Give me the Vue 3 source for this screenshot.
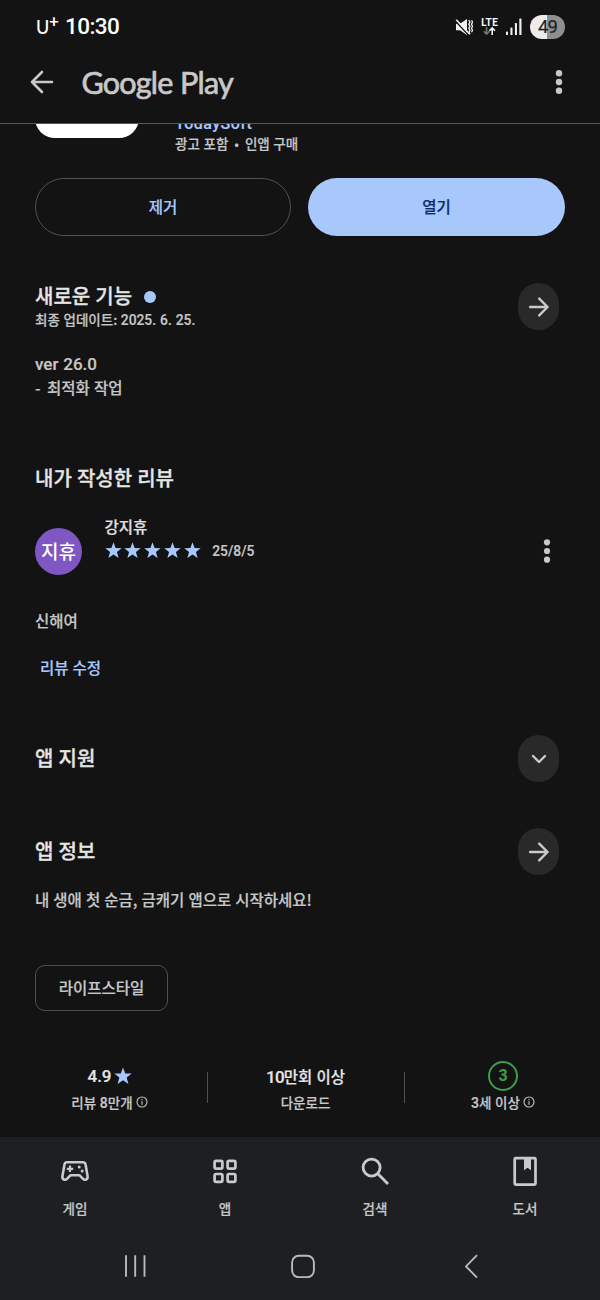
<script setup>
const stars = [0, 1, 2, 3, 4]
const starPath = 'M12 .5l3 8 8.600.3-6.700 5.300 2.300 8.400L12 17.800l-7.200 4.700 2.300-8.400L.4 8.800 9 8.500z'
</script>

<template>
  <div class="screen">
    <div class="status">
      <div class="clock"><span class="carrier">U</span><span class="plus">+</span><span class="time">10:30</span></div>
      <div class="indicators">
        <svg class="mute" width="18" height="18" viewBox="0 0 18 18">
          <path d="M1 5.800h4L12 1v16l-7-4.800H1z" fill="#f2f2f2" />
          <path d="M13.800 2.200l1.200 2-1.200 2 1.200 2-1.200 2 1.200 2-1.200 2 1.200 2M16.600 2.200l.9 2-1 2 1 2-1 2 1 2-1 2" fill="none" stroke="#f2f2f2" stroke-width="1.300" />
          <path d="M0 2.600l13 14" stroke="#131313" stroke-width="1.400" />
          <path d="M1.200 1.800l13.600 14.400" stroke="#f2f2f2" stroke-width="1.600" />
        </svg>
        <div class="lte">
          <span>LTE</span>
          <svg width="13" height="8" viewBox="0 0 13 8" fill="none" stroke-width="1.600">
            <path d="M3.600 0v6.800M.8 4.200l2.800 2.900 2.800-2.900" stroke="#777" />
            <path d="M9.200 8V1M6.400 3.700L9.200.9 12 3.700" stroke="#f2f2f2" />
          </svg>
        </div>
        <svg class="signal" width="16" height="17" viewBox="0 0 16 17" fill="#eee">
          <rect x="0" y="13.500" width="2" height="3.500" rx=".6" />
          <rect x="4.400" y="9.500" width="2.100" height="7.500" rx=".6" />
          <rect x="8.900" y="5" width="2.100" height="12" rx=".6" />
          <rect x="13.300" y=".5" width="2.200" height="16.500" rx=".6" />
        </svg>
        <div class="battery">49</div>
      </div>
    </div>

    <header class="topbar">
      <svg class="back" width="24" height="24" viewBox="0 0 24 24" fill="none" stroke="#c8c8c8" stroke-width="2.600" stroke-linecap="round" stroke-linejoin="round">
        <path d="M22 12H2M12 2L2 12l10 10" />
      </svg>
      <div class="logo">Google Play</div>
      <svg class="more" width="8" height="26" viewBox="0 0 8 26" fill="#c8c8c8">
        <circle cx="4" cy="4.200" r="3.200" /><circle cx="4" cy="13" r="3.200" /><circle cx="4" cy="21.800" r="3.200" />
      </svg>
    </header>

    <main>
      <div class="app-head">
        <div class="app-icon"></div>
        <div class="app-text">
          <div class="dev">TodaySoft</div>
          <div class="meta">광고 포함 <i>•</i> 인앱 구매</div>
        </div>
      </div>

      <div class="actions">
        <button class="remove">제거</button>
        <button class="open">열기</button>
      </div>

      <section class="news">
        <div class="row">
          <div class="news-title">
            <h2>새로운 기능<span class="dot"></span></h2>
            <div class="updated">최종 업데이트: <span class="la">2025. 6. 25.</span></div>
          </div>
          <div class="round">
            <svg width="20" height="20" viewBox="0 0 20 20"><path d="M1 10h17.400M10.200 1.600l8.400 8.400-8.400 8.400" /></svg>
          </div>
        </div>
        <div class="notes"><div class="la ver">ver 26.0</div><div><span class="dash">-</span> 최적화 작업</div></div>
      </section>

      <section class="review">
        <h2>내가 작성한 리뷰</h2>
        <div class="reviewer">
          <div class="avatar">지휴</div>
          <div class="who">
            <div class="name">강지휴</div>
            <div class="rating">
              <svg v-for="s in stars" :key="s" width="17" height="17" viewBox="0 0 24 24"><path :d="starPath" fill="#a8c7fa" /></svg>
              <span class="date">25/8/5</span>
            </div>
          </div>
          <svg class="more" width="8" height="26" viewBox="0 0 8 26" fill="#c8c8c8">
            <circle cx="4" cy="4.300" r="3.100" /><circle cx="4" cy="13" r="3.100" /><circle cx="4" cy="21.700" r="3.100" />
          </svg>
        </div>
        <p class="comment">신해여</p>
        <a class="edit">리뷰 수정</a>
      </section>

      <div class="row support">
        <h2>앱 지원</h2>
        <div class="round">
          <svg width="20" height="20" viewBox="0 0 20 20"><path d="M4 7l6 6 6-6" /></svg>
        </div>
      </div>

      <div class="row info">
        <h2>앱 정보</h2>
        <div class="round">
          <svg width="20" height="20" viewBox="0 0 20 20"><path d="M1 10h17.400M10.200 1.600l8.400 8.400-8.400 8.400" /></svg>
        </div>
      </div>
      <p class="desc">내 생애 첫 순금, 금캐기 앱으로 시작하세요!</p>
      <div class="chip">라이프스타일</div>

      <div class="stats">
        <div class="stat">
          <div class="top"><span class="la score">4.9</span><svg width="18" height="18" viewBox="0 0 24 24"><path :d="starPath" fill="#a8c7fa" /></svg></div>
          <div class="bottom"><span>리뷰 <span class="la">8</span>만개</span>
            <svg class="i" width="12" height="12" viewBox="0 0 12 12"><circle cx="6" cy="6" r="5" /><path d="M6 5.200v3.500M6 3v1.200" /></svg>
          </div>
        </div>
        <div class="stat">
          <div class="top"><span><span class="la ten">10</span>만회 이상</span></div>
          <div class="bottom">다운로드</div>
        </div>
        <div class="stat">
          <div class="top"><span class="age">3</span></div>
          <div class="bottom"><span><span class="la">3</span>세 이상</span>
            <svg class="i" width="12" height="12" viewBox="0 0 12 12"><circle cx="6" cy="6" r="5" /><path d="M6 5.200v3.500M6 3v1.200" /></svg>
          </div>
        </div>
      </div>
    </main>

    <nav class="tabs">
      <div class="tab">
        <svg width="32" height="32" viewBox="0 0 32 32" fill="none" stroke="#c8cacc" stroke-width="2.600" stroke-linejoin="round">
          <path d="M8.200 7.300h15.600c1.600 0 2.600 1 2.800 2.400l2 11.700c.4 3.200-2.800 4.200-4.600 2.400L20.400 20.200h-8.800L8 23.800c-1.800 1.800-5 .8-4.600-2.400l2-11.700c.2-1.400 1.200-2.400 2.800-2.400z" />
          <path d="M11 10.600v6.400M7.800 13.800h6.400" stroke-width="2.200" />
          <g fill="#c8cacc" stroke="none"><circle cx="20.200" cy="12" r="1.500" /><circle cx="23.200" cy="16" r="1.500" /></g>
        </svg>
        <span>게임</span>
      </div>
      <div class="tab">
        <svg width="32" height="32" viewBox="0 0 32 32" fill="none" stroke="#c8cacc" stroke-width="2.700">
          <rect x="5.600" y="5.800" width="7.800" height="7.800" rx="1.500" /><rect x="18.600" y="5.800" width="7.800" height="7.800" rx="1.500" />
          <rect x="5.600" y="19" width="7.800" height="7.800" rx="1.500" /><rect x="18.600" y="19" width="7.800" height="7.800" rx="1.500" />
        </svg>
        <span>앱</span>
      </div>
      <div class="tab">
        <svg width="32" height="32" viewBox="0 0 32 32" fill="none" stroke="#c8cacc" stroke-width="2.800">
          <circle cx="12.600" cy="12.600" r="8.500" /><path d="M18.600 18.600L29 29" />
        </svg>
        <span>검색</span>
      </div>
      <div class="tab">
        <svg width="32" height="32" viewBox="0 0 32 32" fill="none" stroke="#c8cacc" stroke-width="2.700" stroke-linejoin="round">
          <rect x="5.700" y="3.200" width="20.800" height="26.400" rx="1" />
          <path d="M15 3h7v12.300l-3.500-2.600-3.500 2.600z" fill="#c8cacc" stroke="none" />
        </svg>
        <span>도서</span>
      </div>
    </nav>
    <div class="sysnav">
      <svg width="24" height="24" viewBox="0 0 24 24"><path d="M3 1.200v21.600M12.200 1.200v21.600M21.500 1.200v21.600" /></svg>
      <svg width="24" height="24" viewBox="0 0 24 24"><rect x="1.100" y="1.800" width="21.800" height="21.400" rx="6.600" /></svg>
      <svg width="24" height="24" viewBox="0 0 24 24"><path d="M18 1.200L7 12.400l11 11.200" /></svg>
    </div>
  </div>
</template>

<style>
html, body { margin: 0; background: #131313; }
</style>

<style scoped>
.screen {
  width: 600px; height: 1300px; overflow: hidden; background: #131313; color: #c6c7c8;
  display: flex; flex-direction: column; box-sizing: border-box;
  font-family: "Noto Sans CJK KR", sans-serif; font-weight: 500; font-size: 15.500px;
  word-spacing: .6px;
  -webkit-text-stroke: .2px currentColor;
}
.screen * { box-sizing: border-box; }
svg { display: block; flex: none; }
h2, p { margin: 0; }
.la { font-family: Roboto, "Noto Sans CJK KR", sans-serif; line-height: 1; }

.status { height: 52px; flex: none; display: flex; justify-content: space-between; padding: 0 35px 0 36px; color: #fff; -webkit-text-stroke: 0; }
.clock { display: flex; height: 52px; line-height: 52px; font-family: Roboto, sans-serif; }
.carrier { font-family: Lato, sans-serif; font-size: 20px; width: 13px; transform: scaleX(.9); transform-origin: left; }
.plus { font-family: Lato, sans-serif; font-size: 17px; line-height: 41px; width: 16px; font-weight: 700; }
.time { font-size: 22.500px; letter-spacing: -.6px; font-weight: 500; }
.indicators { display: flex; align-items: center; padding-top: 1px; }
.mute { margin-right: 7px; }
.lte { width: 19px; height: 19px; font: 700 10.500px/10px Lato, sans-serif; display: flex; flex-direction: column; align-items: center; margin-right: 7px; }
.signal { margin-right: 8px; }
.battery {
  width: 35px; height: 24px; border-radius: 12px; background: linear-gradient(90deg, #ececec 48%, #8f8f8f 48%);
  color: #222; font: 400 18.500px/24px Roboto, sans-serif; text-align: center; letter-spacing: -.8px;
  -webkit-text-stroke: .2px #222;
}

.topbar { height: 72px; flex: none; display: flex; align-items: center; border-bottom: 1px solid #585858; padding: 0 37px 12px 30px; }
.logo { margin-left: 27.500px; flex: 1; font: 400 30.500px/40px Lato, sans-serif; letter-spacing: -.8px; color: #c8c8c8; -webkit-text-stroke: .7px #c8c8c8; }

main { height: 1013px; flex: none; overflow: hidden; padding: 0 35px; }
.app-head { display: flex; height: 54px; align-items: flex-start; }
.app-icon { width: 104px; height: 104px; margin-top: -90px; border-radius: 20px; background: #fff; flex: none; }
.app-text { margin: -11px 0 0 36px; }
.dev { font: 500 16px/22px Roboto, sans-serif; color: #a8c7fa; letter-spacing: .5px; height: 19px; }
.meta { font-size: 13.500px; line-height: 22px; }
.meta i { font-style: normal; font-size: 12px; line-height: 1; margin: 0 2.500px; }
.actions { display: grid; grid-template-columns: 256px 257px; gap: 17px; }
button { height: 58px; border-radius: 29px; font: 500 15.500px/54px "Noto Sans CJK KR", sans-serif; padding: 0 0 2px; -webkit-text-stroke: .2px currentColor; }
.remove { background: transparent; border: 1px solid #525252; color: #a8c7fa; }
.open { background: #a8c7fa; border: 0; color: #0b2d6e; }

h2 { font-size: 20px; line-height: 28px; font-weight: 500; color: #e5e5e5; display: flex; align-items: center; -webkit-text-stroke: .3px currentColor; }
.dot { width: 12px; height: 12px; border-radius: 50%; background: #a8c7fa; margin: 2px 0 0 12px; }
.row { display: flex; justify-content: space-between; align-items: center; padding-right: 6px; height: 47px; }
.row > h2 { padding-bottom: 2px; }
.news-title { margin-top: -3px; }
.news-title h2 { padding-top: 1px; height: 28px; }
.round { width: 41px; height: 47px; border-radius: 20.500px; background: #29292a; display: grid; place-items: center; flex: none; }
.round path { fill: none; stroke: #cacaca; stroke-width: 2.400; stroke-linecap: round; stroke-linejoin: round; }
.news { margin-top: 47px; height: 180px; }
.updated { font-size: 13.500px; line-height: 20px; height: 20px; }
.updated .la { font-size: 13.800px; }
.notes { margin-top: 23px; line-height: 23px; }
.notes .ver { line-height: 23px; font-size: 17px; }
.dash { display: inline-block; width: 8px; }
.review h2 { height: 28px; padding-top: 2px; }
.reviewer { display: flex; margin-top: 24px; height: 60px; }
.avatar { width: 47px; height: 47px; border-radius: 50%; background: #7e57c2; color: #fff; margin-top: 13px; font-size: 19px; line-height: 45px; text-align: center; -webkit-text-stroke: 0; }
.who { margin-left: 22.500px; flex: 1; }
.name { line-height: 22px; height: 24px; color: #e0e0e0; }
.rating { display: flex; gap: 2.750px; align-items: center; height: 22px; }
.date { font: 500 13.800px/22px Roboto, sans-serif; margin: 2px 0 0 9px; }
.reviewer .more { margin: 23px 14px 0 0; }
.comment { margin-top: 34px; line-height: 22px; height: 22px; }
.edit { display: block; margin: 25px 0 0 5px; line-height: 22px; height: 22px; color: #a8c7fa; }
.support { margin-top: 57px; }
.info { margin-top: 46px; }
.desc { margin-top: 13px; line-height: 22px; height: 22px; }
.chip { margin-top: 55px; width: 133px; height: 46px; border: 1px solid #505050; border-radius: 10px; text-align: center; line-height: 42px; }
.stats { margin: 50px -2px 0 -23px; height: 44px; display: grid; grid-template-columns: 195px 197px 198px; }
.stat { display: flex; flex-direction: column; align-items: center; position: relative; }
.stat + .stat::before { content: ""; position: absolute; left: 0; top: 11px; width: 1px; height: 31px; background: #505050; }
.top { height: 30px; display: flex; align-items: center; color: #e5e5e5; white-space: pre; }
.top .la { font-size: 17px; }
.top .ten { letter-spacing: -.8px; }
.score { margin-right: 2px; }
.bottom { font-size: 13.500px; line-height: 22px; height: 22px; display: flex; align-items: center; gap: 3px; white-space: nowrap; }
.bottom .la { font-size: 14px; }
.i { fill: none; stroke: #c6c7c8; stroke-width: 1.100; }
.age { width: 30px; height: 30px; border: 2px solid #3f9d4b; border-radius: 50%; color: #3f9d4b; font: 700 16px/26px Roboto, sans-serif; text-align: center; -webkit-text-stroke: 0; }

.tabs { height: 96px; flex: none; background: #1e1f21; display: grid; grid-template-columns: repeat(4, 150px); }
.tab { display: flex; flex-direction: column; align-items: center; padding-top: 18px; font-size: 13.500px; }
.tab span { line-height: 22px; margin-top: 10px; }
.sysnav { height: 67px; flex: none; background: #1e1f21; display: flex; justify-content: space-between; padding: 21px 117px 0 123px; }
.sysnav path, .sysnav rect { fill: none; stroke: #b9babb; stroke-width: 1.900; }
</style>
